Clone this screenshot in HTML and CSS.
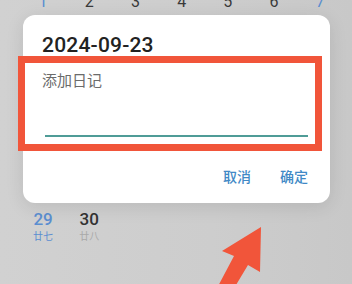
FILE: index.html
```html
<!DOCTYPE html>
<html>
<head>
<meta charset="utf-8">
<link rel="stylesheet" href="styles.css">
</head>
<body>
<div class="screen">
  <div class="calendar">
    <div class="week top">
      <span class="day blue">1</span>
      <span class="day">2</span>
      <span class="day">3</span>
      <span class="day">4</span>
      <span class="day">5</span>
      <span class="day">6</span>
      <span class="day blue">7</span>
    </div>
    <div class="week bottom">
      <div class="cell"><span class="day blue">29</span><span class="lunar blue">廿七</span></div>
      <div class="cell"><span class="day">30</span><span class="lunar grey">廿八</span></div>
    </div>
  </div>

  <div class="dialog">
    <div class="title">2024-09-23</div>
    <div class="field">
      <div class="placeholder">添加日记</div>
      <div class="underline"></div>
    </div>
    <div class="actions">
      <span class="btn">取消</span>
      <span class="btn">确定</span>
    </div>
  </div>

  <div class="highlight"></div>

  <svg class="arrow" width="352" height="284" viewBox="0 0 352 284">
    <polygon points="261,227 260,272 248,265 233,290 216,290 234,256 222,251" fill="#f1553a"/>
  </svg>
</div>
</body>
</html>
```

FILE: styles.css
```css
html, body {
  margin: 0;
  padding: 0;
}
body {
  width: 352px;
  height: 284px;
  overflow: hidden;
  font-family: Roboto, "Noto Sans CJK SC", sans-serif;
}
.screen {
  position: relative;
  width: 352px;
  height: 284px;
  background: linear-gradient(90deg, #d1d1d1 0%, #cdcdcd 60%, #c8c8c8 100%);
  overflow: hidden;
}
.calendar {
  padding-left: 20px;
}
.week {
  display: grid;
  grid-template-columns: repeat(7, 46.2px);
}
.week.top {
  margin-top: -8px;
  height: 20px;
  align-items: start;
}
.week.top .day {
  text-align: center;
  font-size: 16px;
  line-height: 20px;
  color: #3a3a3a;
}
.blue {
  color: #5b8ed0 !important;
}
.week.bottom {
  margin-top: 197px;
}
.cell {
  display: flex;
  flex-direction: column;
  align-items: center;
}
.cell .day {
  font-size: 17px;
  line-height: 20px;
  font-weight: 500;
  color: #333;
}
.lunar {
  font-size: 10px;
  line-height: 14px;
  margin-top: 1px;
}
.lunar.grey {
  color: #a9a9a9;
}
.dialog {
  position: absolute;
  left: 23px;
  top: 15px;
  width: 307px;
  height: 188px;
  background: #fff;
  border-radius: 12px;
  box-shadow: 0 4px 18px rgba(0,0,0,0.10);
  box-sizing: border-box;
  padding: 17px 22px 0 19px;
  display: flex;
  flex-direction: column;
}
.title {
  font-size: 21px;
  line-height: 26px;
  font-weight: 500;
  color: #222;
  letter-spacing: 0.2px;
}
.field {
  margin-top: 12px;
  display: flex;
  flex-direction: column;
}
.placeholder {
  font-size: 15px;
  line-height: 20px;
  color: #6b6b6b;
  font-family: "Noto Sans CJK SC", sans-serif;
}
.underline {
  margin-top: 45px;
  margin-left: 3px;
  height: 2px;
  background: #4f9c97;
}
.actions {
  margin-top: 30px;
  display: flex;
  justify-content: flex-end;
  gap: 29px;
}
.btn {
  font-family: "Noto Sans CJK SC", sans-serif;
  font-size: 14px;
  line-height: 18px;
  font-weight: 500;
  color: #4189c6;
}
.highlight {
  position: absolute;
  left: 18px;
  top: 56px;
  width: 304px;
  height: 95px;
  box-sizing: border-box;
  border: 7px solid #f1553a;
}
.arrow {
  position: absolute;
  left: 0;
  top: 0;
}
```
